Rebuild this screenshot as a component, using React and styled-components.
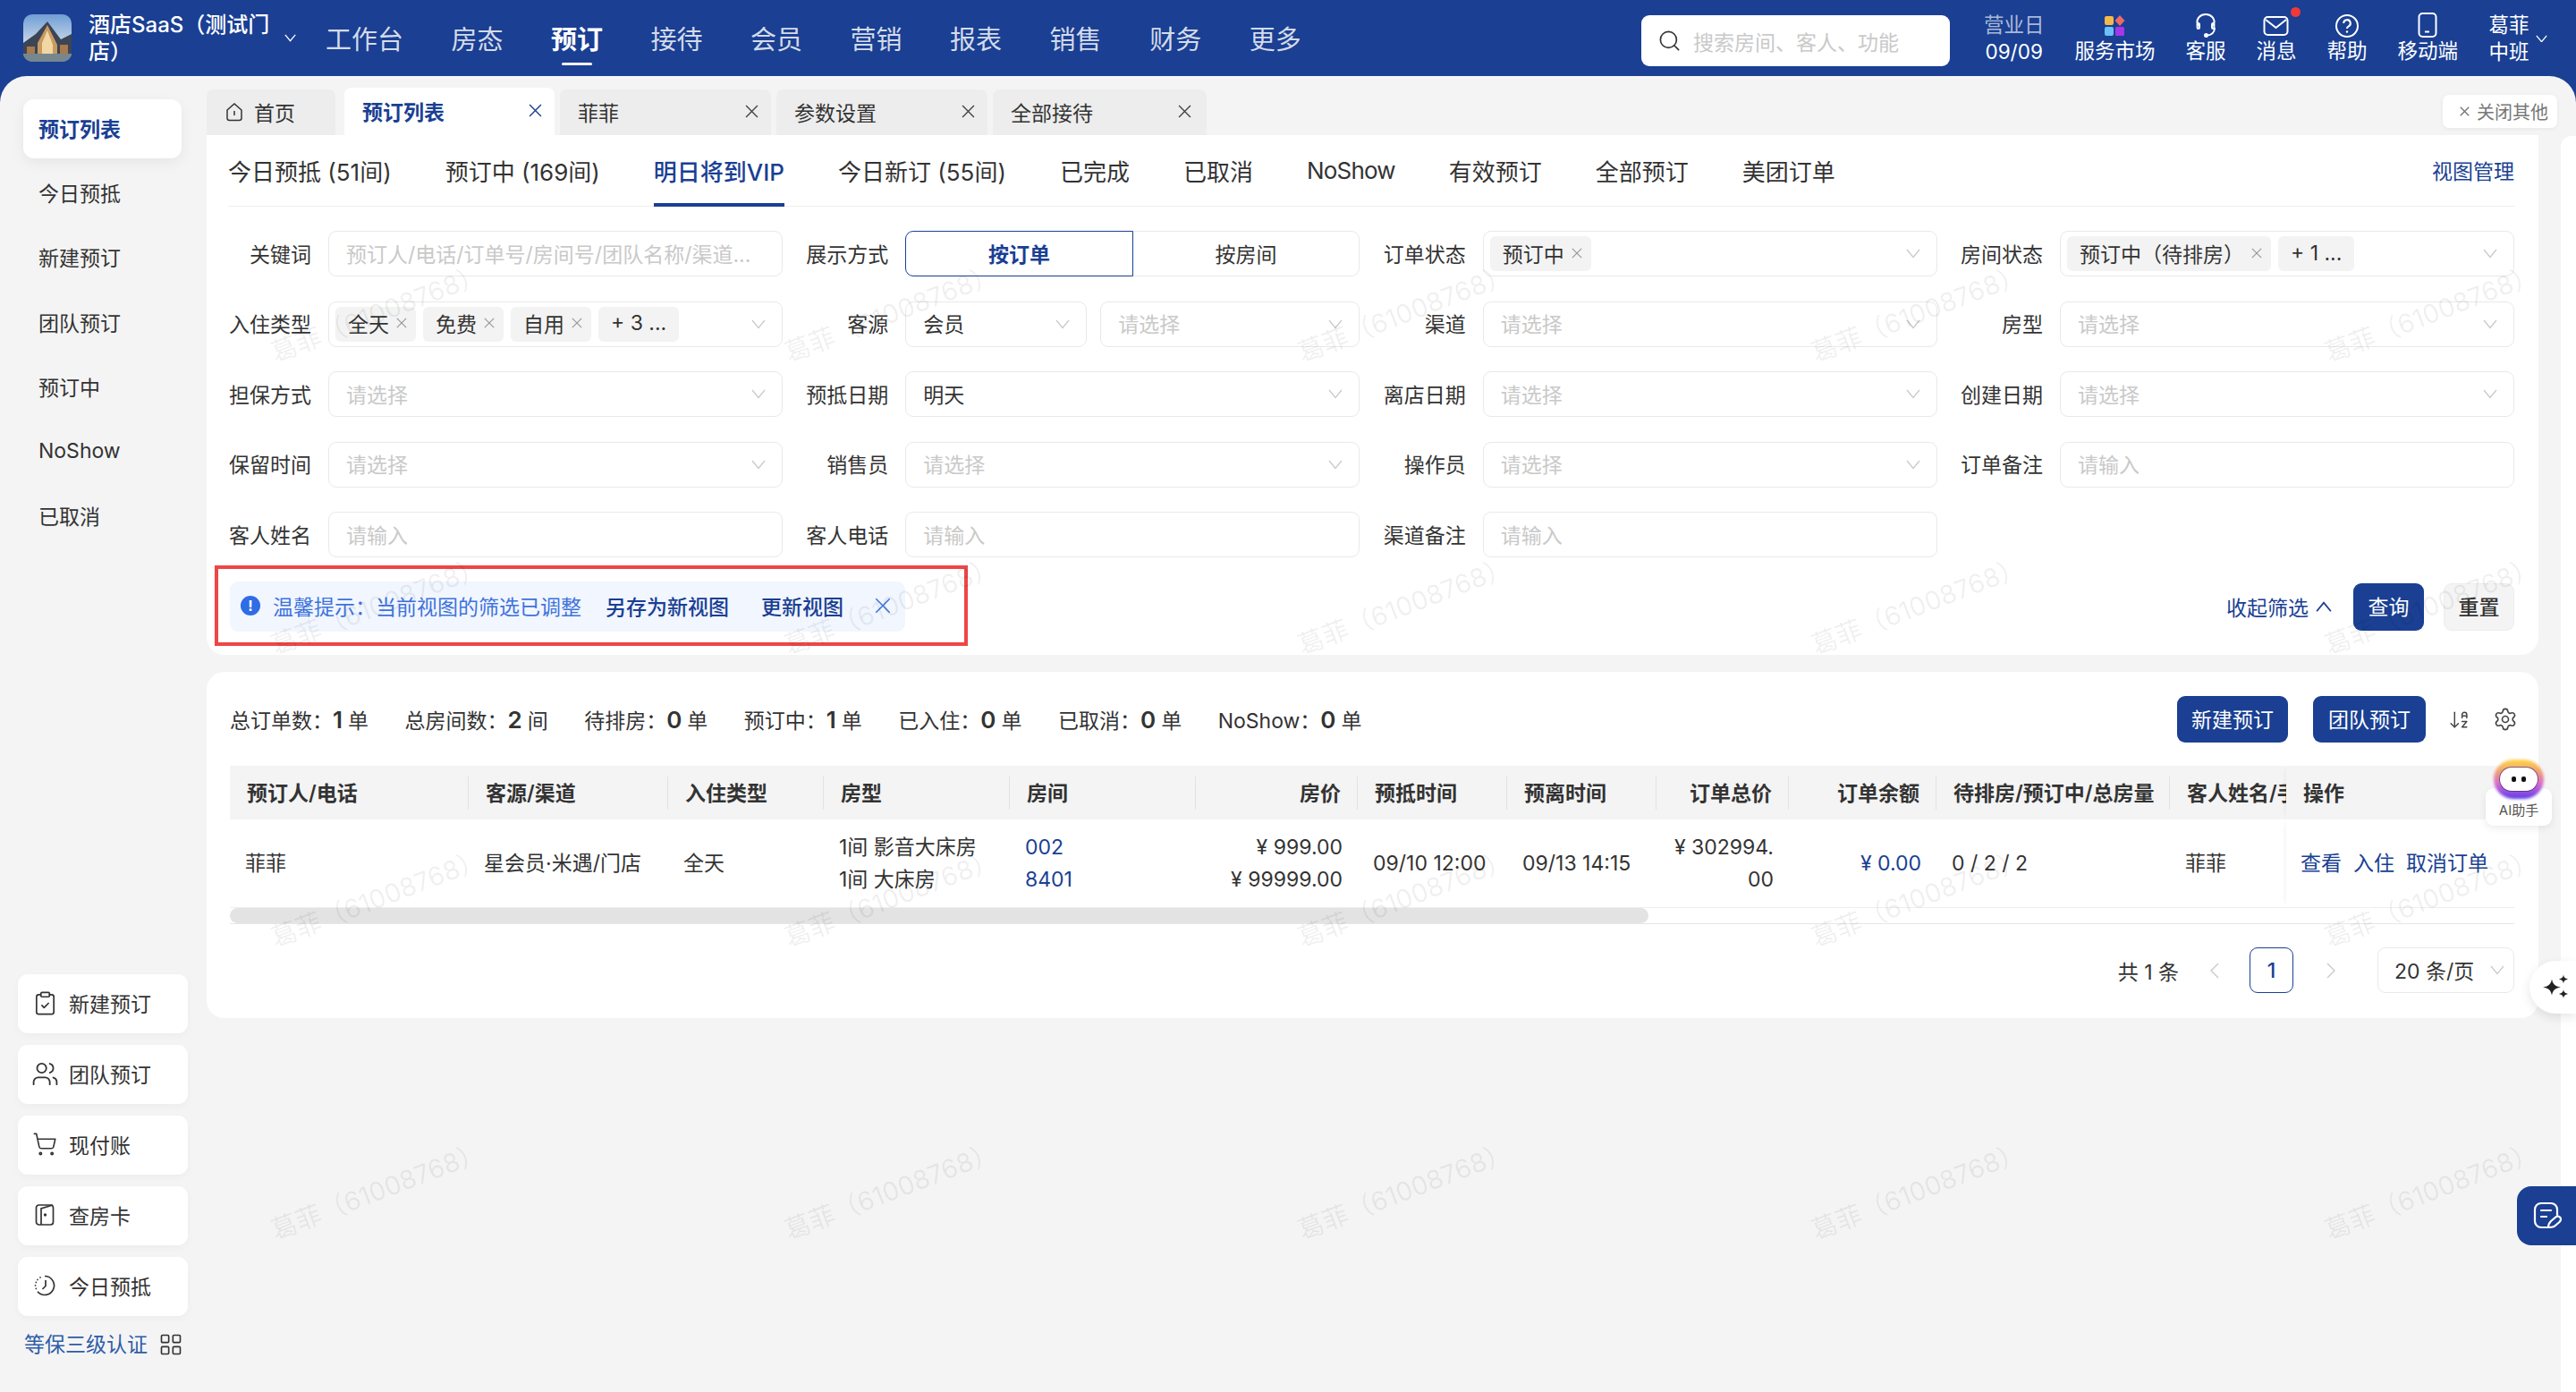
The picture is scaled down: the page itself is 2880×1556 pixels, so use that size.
import React from 'react';
import styled, { createGlobalStyle } from 'styled-components';
import { ArrowDownAZ, ClipboardCheck, LayoutGrid, Search, Settings, ShoppingCart, Users } from 'lucide-react';

const BLUE = '#1a3f93';
const TEXT = '#333333';
const HOLDER = '#c9c9c9';
const LINE = '#e9e9e9';

const GlobalStyle = createGlobalStyle`
  html, body {
    margin: 0;
    padding: 0;
    background: #fff;
    overflow: hidden;
  }
  * {
    box-sizing: border-box;
  }
  #root {
    width: 2880px;
    height: 1556px;
    font-family: Inter, "Noto Sans CJK SC", sans-serif;
    font-size: 23px;
    color: ${TEXT};
  }
`;

const Page = styled.div`
  position: relative;
  width: 2880px;
  height: 1556px;
  display: flex;
  flex-direction: column;
  background: ${BLUE};
  overflow: hidden;
`;

/* top bar */
const TopBar = styled.header`
  flex: none;
  height: 85px;
  display: flex;
  align-items: center;
  padding: 0 32px 0 26px;
  color: #fff;
`;

const Logo = styled.svg`
  flex: none;
  width: 54px;
  height: 53px;
  border-radius: 10px;
`;

const StoreName = styled.div`
  width: 205px;
  margin-left: 19px;
  font-size: 24px;
  line-height: 30px;
  font-weight: 500;
`;

const StoreArrow = styled.span`
  display: flex;
  margin: 0 33px 0 14px;
`;

const MainNav = styled.nav`
  display: flex;
  gap: 53.5px;
  margin-top: 4px;
`;

const NavItem = styled.span`
  position: relative;
  font-size: 29px;
  line-height: 40px;
  font-weight: ${(p) => (p.$active ? 600 : 400)};
  color: ${(p) => (p.$active ? '#fff' : 'rgba(255, 255, 255, 0.82)')};

  ${(p) =>
    p.$active &&
    `&::after {
      content: '';
      position: absolute;
      left: 12px;
      right: 12px;
      bottom: -8px;
      height: 3px;
      border-radius: 2px;
      background: #fff;
    }`}
`;

const TopRight = styled.div`
  margin-left: auto;
  display: flex;
  align-items: flex-start;
  gap: 34px;
  height: 85px;
  font-size: 22.5px;
`;

const SearchBox = styled.div`
  width: 345px;
  height: 57px;
  margin: 17px 4px 0 0;
  display: flex;
  align-items: center;
  gap: 13px;
  padding-left: 18px;
  border-radius: 9px;
  background: #fff;
  font-size: 23px;
  color: ${HOLDER};
  svg {
    color: #333;
  }
`;

const BizDay = styled.div`
  padding-top: 13px;
  line-height: 30px;
  text-align: center;
  span {
    display: block;
    color: rgba(255, 255, 255, 0.65);
  }
`;

const TopTool = styled.div`
  position: relative;
  padding-top: 14px;
  display: flex;
  flex-direction: column;
  align-items: center;
  line-height: 30px;
  color: #fff;
  svg {
    height: 28px;
    display: block;
  }
`;

const RedDot = styled.i`
  position: absolute;
  top: 8px;
  right: -5px;
  width: 11px;
  height: 11px;
  border-radius: 50%;
  background: #f03a3a;
`;

const UserBox = styled.div`
  display: flex;
  align-items: center;
  gap: 7px;
  padding-top: 13px;
  line-height: 30px;
  text-align: center;
  div {
    width: 46px;
  }
`;

/* page body */
const Body = styled.div`
  flex: 1;
  min-height: 0;
  display: flex;
  background: #f4f4f4;
  border-radius: 30px 30px 0 0;
  overflow: hidden;
`;

const Side = styled.aside`
  flex: none;
  width: 231px;
  display: flex;
  flex-direction: column;
  padding: 26px 0 38px;
`;

const SideMenu = styled.div`
  display: flex;
  flex-direction: column;
  gap: 6.2px;
  width: 177px;
  margin-left: 26px;
`;

const SideLink = styled.div`
  height: 66px;
  display: flex;
  align-items: center;
  padding: 0 0 2px 17px;
  border-radius: 12px;
  color: ${(p) => (p.$active ? BLUE : TEXT)};
  font-weight: ${(p) => (p.$active ? 600 : 400)};
  background: ${(p) => (p.$active ? '#fff' : 'transparent')};
  box-shadow: ${(p) => (p.$active ? '0 5px 16px rgba(0, 0, 0, 0.06)' : 'none')};
`;

const QuickList = styled.div`
  margin: auto 0 0 20px;
  width: 190px;
  display: flex;
  flex-direction: column;
  gap: 13px;
`;

const QuickButton = styled.div`
  height: 66px;
  display: flex;
  align-items: center;
  padding-bottom: 2px;
  border-radius: 11px;
  background: #fff;
  box-shadow: 0 3px 10px rgba(0, 0, 0, 0.03);
`;

const QuickIcon = styled.span`
  width: 57px;
  display: flex;
  justify-content: center;
  padding-left: 3px;
  color: #333;
`;

const CertRow = styled.div`
  display: flex;
  align-items: center;
  justify-content: space-between;
  width: 178px;
  margin: 17px 0 0 27px;
  line-height: 30px;
  color: #2f5ca8;
  svg {
    color: #333;
  }
`;

const Content = styled.main`
  flex: 1;
  min-width: 0;
`;

const TabStrip = styled.div`
  height: 66px;
  display: flex;
  align-items: flex-end;
  gap: 6px;
  padding-right: 4px;
`;

const PageTab = styled.div`
  width: ${(p) => p.$width}px;
  height: ${(p) => (p.$active ? 53 : 51)}px;
  margin-right: ${(p) => (p.$home ? 4 : 0)}px;
  display: flex;
  align-items: center;
  gap: 12px;
  padding: 0 14px 2px ${(p) => (p.$home ? 21 : 20)}px;
  border-radius: 8px 8px 0 0;
  background: ${(p) => (p.$active ? '#fff' : '#ededed')};
  color: ${(p) => (p.$active ? BLUE : TEXT)};
  font-weight: ${(p) => (p.$active ? 600 : 400)};
`;

const TabClose = styled.span`
  display: flex;
  margin-left: auto;
  margin-right: ${(p) => p.$inset || 0}px;
  color: ${(p) => (p.$active ? BLUE : '#444')};
`;

const CloseOthers = styled.div`
  margin: 0 0 8px auto;
  width: 128px;
  height: 37px;
  display: flex;
  align-items: center;
  gap: 8px;
  padding-left: 19px;
  border-radius: 7px;
  background: #fff;
  box-shadow: 0 1px 5px rgba(0, 0, 0, 0.06);
  font-size: 20px;
  color: #777;
`;

const Card = styled.section`
  margin-right: 25px;
  background: #fff;
  border-radius: ${(p) => (p.$flatTop ? '0 0 20px 20px' : '20px')};
  padding: 0 27px 0 ${(p) => p.$left}px;
`;

const ViewTabs = styled.div`
  height: 80px;
  display: flex;
  align-items: stretch;
  gap: 60px;
  border-bottom: 1px solid #eeeeee;
`;

const ViewTab = styled.div`
  display: flex;
  align-items: center;
  padding-top: 2px;
  font-size: 26px;
  letter-spacing: ${(p) => (p.$tight ? '-0.8px' : 'normal')};
  color: ${(p) => (p.$active ? BLUE : TEXT)};
  font-weight: ${(p) => (p.$active ? 500 : 400)};
  border-bottom: 4px solid ${(p) => (p.$active ? BLUE : 'transparent')};
  margin-bottom: -1px;
`;

const ViewManage = styled.div`
  margin-left: auto;
  align-self: center;
  padding-bottom: 2px;
  color: ${BLUE};
`;

const FilterGrid = styled.div`
  margin-top: 27px;
  display: grid;
  grid-template-columns: repeat(4, 620px);
  justify-content: space-between;
  grid-auto-rows: 51px;
  row-gap: 27.5px;
`;

const Filter = styled.div`
  display: flex;
  align-items: center;
  gap: 19px;
`;

const FilterLabel = styled.label`
  flex: none;
  width: 93px;
  padding-bottom: 2px;
  text-align: right;
  white-space: nowrap;
`;

const Control = styled.div`
  flex: ${(p) => (p.$width ? 'none' : 1)};
  width: ${(p) => (p.$width ? `${p.$width}px` : 'auto')};
  min-width: 0;
  height: 51px;
  display: flex;
  align-items: center;
  gap: 8px;
  padding: 0 18px 2px ${(p) => (p.$tags ? 7 : 19)}px;
  border: 1px solid ${LINE};
  border-radius: 9px;
  background: transparent;
  white-space: nowrap;
  > svg:last-child {
    margin: 2px 0 0 auto;
    flex: none;
  }
`;

const Holder = styled.span`
  color: ${HOLDER};
`;

const ControlPair = styled.div`
  flex: 1;
  display: flex;
  gap: 15px;
`;

const Tag = styled.span`
  height: 39px;
  display: flex;
  align-items: center;
  gap: 8px;
  margin-top: 2px;
  padding: 0 ${(p) => (p.$more ? 14 : 10)}px 2px 14px;
  border-radius: 6px;
  background: #f3f3f3;
  svg {
    color: #999;
  }
`;

const Segmented = styled.div`
  flex: 1;
  height: 51px;
  display: flex;
`;

const Segment = styled.div`
  flex: 1;
  display: flex;
  align-items: center;
  justify-content: center;
  padding-bottom: 2px;
  border: ${(p) => (p.$active ? `1.5px solid ${BLUE}` : `1px solid ${LINE}`)};
  border-left-width: ${(p) => (p.$active ? '1.5px' : 0)};
  border-radius: ${(p) => (p.$active ? '9px 0 0 9px' : '0 9px 9px 0')};
  color: ${(p) => (p.$active ? BLUE : TEXT)};
  font-weight: ${(p) => (p.$active ? 600 : 400)};
`;

const ActionRow = styled.div`
  margin-top: 27px;
  padding-bottom: 26px;
  display: flex;
  align-items: center;
`;

const Notice = styled.div`
  position: relative;
  margin-left: 2px;
  width: 755px;
  height: 56px;
  display: flex;
  align-items: center;
  padding: 0 0 2px 12px;
  border-radius: 9px;
  background: #f1f6ff;
  color: #3f73dc;
`;

const NoticeDot = styled.span`
  flex: none;
  width: 22px;
  height: 22px;
  margin-right: 14px;
  border-radius: 50%;
  background: #2f6ce5;
  color: #fff;
  font-size: 16px;
  line-height: 22px;
  font-weight: 700;
  text-align: center;
`;

const NoticeLink = styled.span`
  margin-left: ${(p) => p.$gap}px;
  color: ${BLUE};
  font-weight: 500;
`;

const NoticeClose = styled.span`
  display: flex;
  margin-left: 35px;
`;

/* markup on the picture, lies over the notice */
const RedFrame = styled.div`
  position: absolute;
  inset: -18px -70px -16px -17px;
  border: 4px solid #ee4646;
`;

const Actions = styled.div`
  margin-left: auto;
  display: flex;
  align-items: center;
`;

const Collapse = styled.div`
  display: flex;
  align-items: center;
  gap: 8px;
  color: ${BLUE};
  margin-right: 24px;
`;

const Button = styled.div`
  width: ${(p) => p.$width}px;
  height: ${(p) => p.$height}px;
  margin-left: ${(p) => p.$gap || 0}px;
  display: flex;
  align-items: center;
  justify-content: center;
  padding-bottom: 2px;
  border-radius: 9px;
  background: ${(p) => (p.$plain ? '#f4f4f4' : BLUE)};
  color: ${(p) => (p.$plain ? TEXT : '#fff')};
  border: ${(p) => (p.$plain ? '1px solid #ececec' : 'none')};
  font-weight: ${(p) => (p.$plain ? 500 : 400)};
`;

const ListCard = styled(Card)`
  margin-top: 19px;
  padding-top: 27px;
  padding-bottom: 28px;
`;

const ListBar = styled.div`
  height: 52px;
  display: flex;
  align-items: center;
`;

const Stats = styled.div`
  display: flex;
  gap: 40.5px;
`;

const Stat = styled.div`
  display: flex;
  align-items: baseline;
  b {
    font-size: 26px;
    font-weight: 600;
    margin-right: 6px;
  }
`;

const ListActions = styled.div`
  margin-left: auto;
  display: flex;
  align-items: center;
  svg {
    color: #444;
  }
`;

const TableGrid = styled.div`
  margin-top: 26px;
  display: grid;
  grid-template-columns: 267px 223px 174px 208px 208px 181px 167px 167px 148px 165px 261px 130px 255px;
`;

const HeadCell = styled.div`
  position: relative;
  height: 60px;
  display: flex;
  align-items: center;
  justify-content: ${(p) => (p.$right ? 'flex-end' : 'flex-start')};
  padding: ${(p) => (p.$right ? '0 19px 2px 0' : '0 0 2px 19px')};
  background: #f4f4f4;
  font-weight: 600;
  white-space: nowrap;
  overflow: hidden;

  &:not(:nth-child(n + 12))::after {
    content: '';
    position: absolute;
    top: 12px;
    bottom: 11px;
    right: 0;
    width: 1px;
    background: #e2e2e2;
  }
`;

const BodyCell = styled.div`
  height: 99px;
  display: flex;
  flex-direction: column;
  justify-content: center;
  align-items: ${(p) => (p.$right ? 'flex-end' : 'flex-start')};
  padding: 0 17px;
  line-height: 36px;
  white-space: nowrap;
  text-align: ${(p) => (p.$right ? 'right' : 'left')};
  border-bottom: 1px solid #eeeeee;
  color: ${(p) => (p.$link ? BLUE : TEXT)};
`;

const OpCell = styled(BodyCell)`
  flex-direction: row;
  justify-content: flex-start;
  align-items: center;
  gap: 13px;
  padding-left: 16px;
  color: ${BLUE};
  box-shadow: -5px 0 6px -4px rgba(0, 0, 0, 0.05);
`;

const OpHead = styled(HeadCell)`
  box-shadow: -5px 0 6px -4px rgba(0, 0, 0, 0.05);
`;

const ScrollTrack = styled.div`
  height: 18px;
  border-bottom: 1px solid #e6e6e6;
`;

const ScrollThumb = styled.div`
  height: 17px;
  border-radius: 9px;
  background: #e3e3e3;
`;

const Pager = styled.div`
  margin-top: 26px;
  display: flex;
  align-items: center;
  justify-content: flex-end;
`;

const PageBox = styled.div`
  width: 49px;
  height: 51px;
  display: flex;
  align-items: center;
  justify-content: center;
  margin: 0 37px 0 34px;
  border: 1px solid ${BLUE};
  border-radius: 9px;
  color: ${BLUE};
  font-weight: 500;
`;

const PagerArrow = styled.span`
  display: flex;
  margin-left: ${(p) => p.$gap || 0}px;
  color: #c8c8c8;
`;

const SizeSelect = styled(Control)`
  flex: none;
  width: 153px;
  margin-left: 46px;
  padding: 0 10px 2px 18px;
  color: ${TEXT};
`;

const RightRail = styled.div`
  flex: none;
  width: 17px;
  margin-top: 67px;
  background: #fff;
  border-radius: 12px 0 0 0;
`;

/* floating things, on top of the page */
const Watermarks = styled.div`
  position: absolute;
  inset: 184px 0 0 134px;
  display: grid;
  grid-template-columns: repeat(5, 574px);
  grid-auto-rows: 327px;
  overflow: hidden;
  pointer-events: none;
`;

const Watermark = styled.div`
  display: flex;
  align-items: center;
  justify-content: center;
  font-size: 29px;
  white-space: nowrap;
  color: rgba(0, 0, 0, 0.065);
  span {
    transform: rotate(-21deg);
  }
`;

const AiHelper = styled.div`
  position: absolute;
  left: 2779px;
  top: 849px;
  width: 74px;
  display: flex;
  flex-direction: column;
  align-items: center;
`;

const AiGlow = styled.div`
  position: relative;
  z-index: 1;
  width: 56px;
  height: 44px;
  display: flex;
  align-items: center;
  justify-content: center;

  &::before {
    content: '';
    position: absolute;
    inset: 0;
    border-radius: 22px;
    background: linear-gradient(180deg, #ffd84a 0%, #f0a070 30%, #d76ad0 62%, #5a3ce8 100%);
    filter: blur(1.5px);
  }
`;

const AiFace = styled.div`
  position: relative;
  width: 42px;
  height: 26px;
  display: flex;
  align-items: center;
  justify-content: center;
  gap: 6px;
  border-radius: 13px;
  background: #fff;
  box-shadow: 0 0 0 1px rgba(60, 30, 120, 0.6);
  i {
    width: 5px;
    height: 6px;
    border-radius: 2px;
    background: #111;
  }
`;

const AiLabel = styled.div`
  width: 74px;
  height: 42px;
  margin-top: -12px;
  padding-top: 15px;
  border-radius: 9px;
  background: #fff;
  box-shadow: 0 3px 8px rgba(0, 0, 0, 0.08);
  font-size: 15px;
  line-height: 20px;
  text-align: center;
  color: #555;
`;

const SparkButton = styled.div`
  position: absolute;
  right: 0;
  top: 1074px;
  width: 52px;
  height: 59px;
  display: flex;
  align-items: center;
  padding-left: 14px;
  border-radius: 30px 0 0 30px;
  background: #fff;
  box-shadow: 0 4px 12px rgba(0, 0, 0, 0.1);
`;

const NoteButton = styled.div`
  position: absolute;
  right: 0;
  top: 1326px;
  width: 66px;
  height: 66px;
  display: flex;
  align-items: center;
  padding-left: 18px;
  border-radius: 16px 0 0 16px;
  background: ${BLUE};
`;

const Cross = ({ size = 12, weight = 1.3 }) => (
  <svg width={size} height={size} viewBox="0 0 14 14" fill="none" stroke="currentColor" strokeWidth={(weight * 14) / size}>
    <path d="M1 1 13 13M13 1 1 13" />
  </svg>
);

const Chevron = ({ up, width = 16, color = '#c8c8c8', weight = 1.2 }) => (
  <svg width={width} height={(width * 11) / 16} viewBox="0 0 16 11" fill="none" stroke={color} strokeWidth={weight}>
    <path d={up ? 'M1 10 8 1.5 15 10' : 'M1 1 8 9.5 15 1'} />
  </svg>
);

const PagerChevron = ({ left }) => (
  <svg width="11" height="18" viewBox="0 0 11 18" fill="none" stroke="currentColor" strokeWidth="1.3">
    <path d={left ? 'M10 1 2 9l8 8' : 'M1 1l8 8-8 8'} />
  </svg>
);

const HotelLogo = () => (
  <Logo viewBox="0 0 54 53">
    <defs>
      <linearGradient id="logoSky" x1="0" y1="0" x2="0" y2="1">
        <stop offset="0" stopColor="#6f9ed6" />
        <stop offset="0.6" stopColor="#c7d6e6" />
        <stop offset="1" stopColor="#8a8f8c" />
      </linearGradient>
    </defs>
    <rect width="54" height="53" fill="url(#logoSky)" />
    <path d="M0 32 14 22 27 8 42 28 54 22V44H0Z" fill="#3c4556" />
    <path d="M27 12 38 34V44H16V32Z" fill="#c89a62" />
    <path d="M27 18 33 34V44H21V32Z" fill="#f0d7a4" />
    <path d="M0 44H54V53H0Z" fill="#77878f" />
    <path d="M4 36h9v8H4zM41 34h9v10h-9z" fill="#a87a4c" />
  </Logo>
);

const MarketIcon = () => (
  <svg width="24" height="24" viewBox="0 0 24 24" style={{ height: 24, marginTop: 3, marginBottom: 1 }}>
    <rect x="1" y="1" width="10" height="10" rx="2" fill="#f3b94a" />
    <path d="M18 0 23.5 6 18 12 12.5 6Z" fill="#ec6a66" />
    <rect x="1" y="13" width="10" height="10" rx="2" fill="#6cc0fa" />
    <rect x="13" y="13" width="10" height="10" rx="1.5" fill="#a636e8" />
  </svg>
);

const HeadsetIcon = () => (
  <svg width="26" height="28" viewBox="0 0 26 28" fill="none" stroke="#fff" strokeWidth="2" strokeLinecap="round">
    <path d="M4 14C1.5 6 8 2 13 2s11.5 4 9 12" />
    <rect x="3.6" y="12" width="2.4" height="6" rx="1.2" />
    <rect x="20" y="12" width="2.4" height="6" rx="1.2" />
    <path d="M23 18c-.5 4.5-4 7-8 7.5" />
    <circle cx="13.5" cy="25.5" r="1.5" fill="#fff" />
  </svg>
);

const MailIcon = () => (
  <svg width="29" height="28" viewBox="0 0 29 28" fill="none" stroke="#fff" strokeWidth="2">
    <rect x="1.5" y="5" width="26" height="20" rx="4" />
    <path d="M3 8l11.5 9L26 8" />
  </svg>
);

const HelpIcon = () => (
  <svg width="28" height="28" viewBox="0 0 28 28" fill="none" stroke="#fff" strokeWidth="2">
    <circle cx="14" cy="15" r="12" />
    <path d="M10.2 12a3.8 3.8 0 1 1 5.6 3.3c-1.2.7-1.8 1.4-1.8 2.7" />
    <circle cx="14" cy="21.5" r="1.2" fill="#fff" stroke="none" />
  </svg>
);

const PhoneIcon = () => (
  <svg width="22" height="28" viewBox="0 0 22 28" fill="none" stroke="#fff" strokeWidth="2">
    <rect x="1.5" y="1" width="19" height="26" rx="4" />
    <path d="M8 21.5h5" />
  </svg>
);

const HomeIcon = () => (
  <svg width="20" height="22" viewBox="0 0 20 22" fill="none" stroke="#333" strokeWidth="1.5">
    <path d="M2 9 10 2l8 7v9a2.5 2.5 0 0 1-2.5 2.5h-11A2.5 2.5 0 0 1 2 18Z" />
    <path d="M10 10v5" />
  </svg>
);

const DoorIcon = () => (
  <svg width="22" height="24" viewBox="0 0 22 24" fill="none" stroke="#333" strokeWidth="1.7">
    <rect x="1.5" y="1" width="19" height="22" rx="3" />
    <path d="M7 23V5l13-4" />
    <circle cx="11.5" cy="12" r="0.8" fill="#333" />
  </svg>
);

const ClockIcon = () => (
  <svg width="24" height="24" viewBox="0 0 24 24" fill="none" stroke="#333" strokeWidth="1.7">
    <path d="M12 1.5a10.5 10.5 0 1 1-8 17.3" />
    <path d="M2.3 15.5v-.1M1.5 12v-.1M2.3 8.5v-.1M4 5.5v-.1M7 3v-.1" strokeLinecap="round" />
    <path d="M13 6v6.5l-3.5 3.5" />
  </svg>
);

const SparkIcon = () => (
  <svg width="30" height="31" viewBox="0 0 30 28" fill="#222">
    <path d="M11 5c1 5 3 8 10 9-7 1-9 4-10 9-1-5-3-8-10-9 7-1 9-4 10-9Z" />
    <path d="M24 0c.5 3 1.5 4 5 5-3.5 1-4.5 2-5 5-.5-3-1.5-4-5-5 3.5-1 4.5-2 5-5Z" />
    <path d="M24 16.5c.5 3 1.5 4 5 5-3.5 1-4.5 2-5 5-.5-3-1.5-4-5-5 3.5-1 4.5-2 5-5Z" />
  </svg>
);

const NoteIcon = () => (
  <svg width="34" height="32" viewBox="0 0 34 32" fill="none" stroke="#fff" strokeWidth="2.2" strokeLinecap="round">
    <path d="M17 29H9a7 7 0 0 1-7-7V9a7 7 0 0 1 7-7h11a7 7 0 0 1 7 7v6" />
    <path d="M9 10h11M9 17h6" />
    <path d="M17 29c0-3 1-5 3-7l6-5c2-1 5 0 5 3 0 1-.5 2-1.5 3l-6 5c-2 1-4.5 1-6.5 1Z" />
  </svg>
);

const TagItem = ({ text }) => (
  <Tag>
    {text}
    <Cross size={12} weight={1.2} />
  </Tag>
);

const tagChoices = {
  '入住类型': ['全天', '免费', '自用'],
  '订单状态': ['预订中'],
  '房间状态': ['预订中（待排房）'],
};

const moreChoices = { '入住类型': '+ 3 ...', '房间状态': '+ 1 ...' };

const filters = [
  { label: '关键词', holder: '预订人/电话/订单号/房间号/团队名称/渠道...', input: true },
  { label: '展示方式', kind: 'segment' },
  { label: '订单状态', kind: 'tags' },
  { label: '房间状态', kind: 'tags' },
  { label: '入住类型', kind: 'tags' },
  { label: '客源', kind: 'pair' },
  { label: '渠道', holder: '请选择' },
  { label: '房型', holder: '请选择' },
  { label: '担保方式', holder: '请选择' },
  { label: '预抵日期', value: '明天' },
  { label: '离店日期', holder: '请选择' },
  { label: '创建日期', holder: '请选择' },
  { label: '保留时间', holder: '请选择' },
  { label: '销售员', holder: '请选择' },
  { label: '操作员', holder: '请选择' },
  { label: '订单备注', holder: '请输入', input: true },
  { label: '客人姓名', holder: '请输入', input: true },
  { label: '客人电话', holder: '请输入', input: true },
  { label: '渠道备注', holder: '请输入', input: true },
];

const FilterControl = ({ item }) => {
  if (item.kind === 'segment') {
    return (
      <Segmented>
        <Segment $active>按订单</Segment>
        <Segment>按房间</Segment>
      </Segmented>
    );
  }
  if (item.kind === 'tags') {
    return (
      <Control $tags>
        {tagChoices[item.label].map((t) => (
          <TagItem key={t} text={t} />
        ))}
        {moreChoices[item.label] && <Tag $more>{moreChoices[item.label]}</Tag>}
        <Chevron />
      </Control>
    );
  }
  if (item.kind === 'pair') {
    return (
      <ControlPair>
        <Control $width={203}>
          会员
          <Chevron />
        </Control>
        <Control>
          <Holder>请选择</Holder>
          <Chevron />
        </Control>
      </ControlPair>
    );
  }
  return (
    <Control>
      {item.value || <Holder>{item.holder}</Holder>}
      {!item.input && <Chevron />}
    </Control>
  );
};

const heads = [
  ['预订人/电话'],
  ['客源/渠道'],
  ['入住类型'],
  ['房型'],
  ['房间'],
  ['房价', true],
  ['预抵时间'],
  ['预离时间'],
  ['订单总价', true],
  ['订单余额', true],
  ['待排房/预订中/总房量'],
  ['客人姓名/手机'],
];

const stats = [
  ['总订单数：', 1, '单'],
  ['总房间数：', 2, '间'],
  ['待排房：', 0, '单'],
  ['预订中：', 1, '单'],
  ['已入住：', 0, '单'],
  ['已取消：', 0, '单'],
  ['NoShow：', 0, '单'],
];

const navs = ['工作台', '房态', '预订', '接待', '会员', '营销', '报表', '销售', '财务', '更多'];
const sideLinks = ['预订列表', '今日预抵', '新建预订', '团队预订', '预订中', 'NoShow', '已取消'];
const pageTabs = ['预订列表', '菲菲', '参数设置', '全部接待'];
const viewTabs = ['今日预抵 (51间)', '预订中 (169间)', '明日将到VIP', '今日新订 (55间)', '已完成', '已取消', 'NoShow', '有效预订', '全部预订', '美团订单'];
const quickButtons = [
  ['新建预订', <ClipboardCheck key="a" size={29} strokeWidth={1.4} />],
  ['团队预订', <Users key="b" size={31} strokeWidth={1.4} />],
  ['现付账', <ShoppingCart key="c" size={28} strokeWidth={1.4} />],
  ['查房卡', <DoorIcon key="d" />],
  ['今日预抵', <ClockIcon key="e" />],
];

export default function App() {
  return (
    <Page>
      <GlobalStyle />
      <TopBar>
        <HotelLogo />
        <StoreName>酒店SaaS（测试门店）</StoreName>
        <StoreArrow>
          <Chevron width={13} color="#fff" weight={1.6} />
        </StoreArrow>
        <MainNav>
          {navs.map((n) => (
            <NavItem key={n} $active={n === '预订'}>
              {n}
            </NavItem>
          ))}
        </MainNav>
        <TopRight>
          <SearchBox>
            <Search size={27} strokeWidth={1.5} />
            搜索房间、客人、功能
          </SearchBox>
          <BizDay>
            <span>营业日</span>
            09/09
          </BizDay>
          <TopTool>
            <MarketIcon />
            服务市场
          </TopTool>
          <TopTool>
            <HeadsetIcon />
            客服
          </TopTool>
          <TopTool>
            <MailIcon />
            <RedDot />
            消息
          </TopTool>
          <TopTool>
            <HelpIcon />
            帮助
          </TopTool>
          <TopTool>
            <PhoneIcon />
            移动端
          </TopTool>
          <UserBox>
            <div>
              葛菲
              <br />
              中班
            </div>
            <Chevron width={13} color="#fff" weight={1.6} />
          </UserBox>
        </TopRight>
      </TopBar>

      <Body>
        <Side>
          <SideMenu>
            {sideLinks.map((s, i) => (
              <SideLink key={s} $active={i === 0}>
                {s}
              </SideLink>
            ))}
          </SideMenu>
          <QuickList>
            {quickButtons.map(([text, icon]) => (
              <QuickButton key={text}>
                <QuickIcon>{icon}</QuickIcon>
                <span>{text}</span>
              </QuickButton>
            ))}
          </QuickList>
          <CertRow>
            等保三级认证
            <LayoutGrid size={28} strokeWidth={1.4} />
          </CertRow>
        </Side>

        <Content>
          <TabStrip>
            <PageTab $home $width={144}>
              <HomeIcon />
              首页
            </PageTab>
            {pageTabs.map((t, i) => (
              <PageTab key={t} $active={i === 0} $width={i === 0 ? 235 : i === 3 ? 239 : 236}>
                {t}
                <TabClose $active={i === 0} $inset={i === 3 ? 3 : 0}>
                  <Cross size={15} weight={1.4} />
                </TabClose>
              </PageTab>
            ))}
            <CloseOthers>
              <Cross size={11} weight={1.4} />
              关闭其他
            </CloseOthers>
          </TabStrip>

          <Card $flatTop $left={24}>
            <ViewTabs>
              {viewTabs.map((t) => (
                <ViewTab key={t} $active={t === '明日将到VIP'} $tight={t === 'NoShow'}>
                  {t}
                </ViewTab>
              ))}
              <ViewManage>视图管理</ViewManage>
            </ViewTabs>

            <FilterGrid>
              {filters.map((f) => (
                <Filter key={f.label}>
                  <FilterLabel>{f.label}</FilterLabel>
                  <FilterControl item={f} />
                </Filter>
              ))}
            </FilterGrid>

            <ActionRow>
              <Notice>
                <NoticeDot>!</NoticeDot>
                温馨提示：当前视图的筛选已调整
                <NoticeLink $gap={27}>另存为新视图</NoticeLink>
                <NoticeLink $gap={36}>更新视图</NoticeLink>
                <NoticeClose>
                  <Cross size={18} weight={1.6} />
                </NoticeClose>
                <RedFrame />
              </Notice>
              <Actions>
                <Collapse>
                  收起筛选
                  <Chevron up width={18} color={BLUE} weight={1.6} />
                </Collapse>
                <Button $width={79} $height={53}>
                  查询
                </Button>
                <Button $plain $width={79} $height={53} $gap={22}>
                  重置
                </Button>
              </Actions>
            </ActionRow>
          </Card>

          <ListCard $left={26}>
            <ListBar>
              <Stats>
                {stats.map(([label, n, unit]) => (
                  <Stat key={label}>
                    {label}
                    <b>{n}</b>
                    {unit}
                  </Stat>
                ))}
              </Stats>
              <ListActions>
                <Button $width={124} $height={52}>
                  新建预订
                </Button>
                <Button $width={126} $height={52} $gap={28}>
                  团队预订
                </Button>
                <ArrowDownAZ size={25} strokeWidth={1.4} style={{ marginLeft: 25 }} />
                <Settings size={28} strokeWidth={1.4} style={{ margin: '0 -4px 0 25px' }} />
              </ListActions>
            </ListBar>

            <TableGrid>
              {heads.map(([h, right]) => (
                <HeadCell key={h} $right={right}>
                  {h}
                </HeadCell>
              ))}
              <OpHead>操作</OpHead>

              <BodyCell>菲菲</BodyCell>
              <BodyCell>星会员·米遇/门店</BodyCell>
              <BodyCell>全天</BodyCell>
              <BodyCell>
                <div>1间 影音大床房</div>
                <div>1间 大床房</div>
              </BodyCell>
              <BodyCell $link>
                <div>002</div>
                <div>8401</div>
              </BodyCell>
              <BodyCell $right>
                <div>¥ 999.00</div>
                <div>¥ 99999.00</div>
              </BodyCell>
              <BodyCell>09/10 12:00</BodyCell>
              <BodyCell>09/13 14:15</BodyCell>
              <BodyCell $right>
                <div>
                  ¥ 302994.
                  <br />
                  00
                </div>
              </BodyCell>
              <BodyCell $right $link>
                ¥ 0.00
              </BodyCell>
              <BodyCell>0 / 2 / 2</BodyCell>
              <BodyCell>菲菲</BodyCell>
              <OpCell>
                <span>查看</span>
                <span>入住</span>
                <span>取消订单</span>
              </OpCell>
            </TableGrid>

            <ScrollTrack>
              <ScrollThumb style={{ width: 1586 }} />
            </ScrollTrack>

            <Pager>
              共 1 条
              <PagerArrow $gap={34}>
                <PagerChevron left />
              </PagerArrow>
              <PageBox>1</PageBox>
              <PagerArrow>
                <PagerChevron />
              </PagerArrow>
              <SizeSelect>
                20 条/页
                <Chevron />
              </SizeSelect>
            </Pager>
          </ListCard>
        </Content>

        <RightRail />
      </Body>

      <Watermarks>
        {Array.from({ length: 20 }, (_, i) => (
          <Watermark key={i}>
            <span>葛菲（61008768）</span>
          </Watermark>
        ))}
      </Watermarks>

      <AiHelper>
        <AiGlow>
          <AiFace>
            <i />
            <i />
          </AiFace>
        </AiGlow>
        <AiLabel>AI助手</AiLabel>
      </AiHelper>
      <SparkButton>
        <SparkIcon />
      </SparkButton>
      <NoteButton>
        <NoteIcon />
      </NoteButton>
    </Page>
  );
}
